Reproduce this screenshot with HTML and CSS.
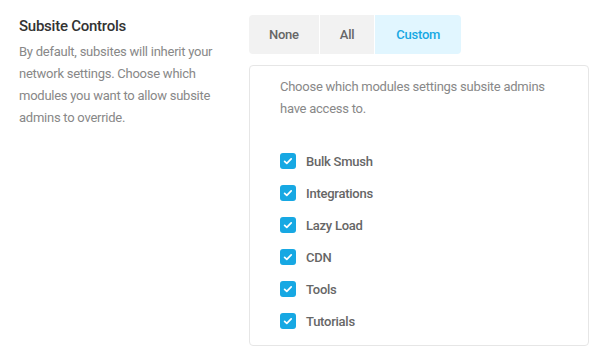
FILE: index.html
```html
<!DOCTYPE html>
<html lang="en">

<head>
    <meta charset="UTF-8">
    <meta name="viewport" content="width=device-width, initial-scale=1.0">
    <title>Subsite Controls</title>
    <link rel="stylesheet" href="styles.css">
</head>

<body>

    <!-- Settings row -->
    <div class="settings-row">
        <div class="settings-label">
            <h3>Subsite Controls</h3>
            <p>By default, subsites will inherit your network settings. Choose which modules you want to allow subsite admins to override.</p>
        </div>

        <div class="settings-content">
            <div class="tabs">
                <div class="tab">None</div>
                <div class="tab">All</div>
                <div class="tab active">Custom</div>
            </div>

            <div class="tab-box">
                <p class="box-desc">Choose which modules settings subsite admins have access to.</p>
                <ul class="module-list">
                    <li><span class="check"><svg viewBox="0 0 16 16" width="16" height="16"><path d="M4.6 8.3l2.2 2.1 4.4-4.6" fill="none" stroke="#fff" stroke-width="1.7" stroke-linecap="round" stroke-linejoin="round"/></svg></span>Bulk Smush</li>
                    <li><span class="check"><svg viewBox="0 0 16 16" width="16" height="16"><path d="M4.6 8.3l2.2 2.1 4.4-4.6" fill="none" stroke="#fff" stroke-width="1.7" stroke-linecap="round" stroke-linejoin="round"/></svg></span>Integrations</li>
                    <li><span class="check"><svg viewBox="0 0 16 16" width="16" height="16"><path d="M4.6 8.3l2.2 2.1 4.4-4.6" fill="none" stroke="#fff" stroke-width="1.7" stroke-linecap="round" stroke-linejoin="round"/></svg></span>Lazy Load</li>
                    <li><span class="check"><svg viewBox="0 0 16 16" width="16" height="16"><path d="M4.6 8.3l2.2 2.1 4.4-4.6" fill="none" stroke="#fff" stroke-width="1.7" stroke-linecap="round" stroke-linejoin="round"/></svg></span>CDN</li>
                    <li><span class="check"><svg viewBox="0 0 16 16" width="16" height="16"><path d="M4.6 8.3l2.2 2.1 4.4-4.6" fill="none" stroke="#fff" stroke-width="1.7" stroke-linecap="round" stroke-linejoin="round"/></svg></span>Tools</li>
                    <li><span class="check"><svg viewBox="0 0 16 16" width="16" height="16"><path d="M4.6 8.3l2.2 2.1 4.4-4.6" fill="none" stroke="#fff" stroke-width="1.7" stroke-linecap="round" stroke-linejoin="round"/></svg></span>Tutorials</li>
                </ul>
            </div>
        </div>
    </div>

</body>

</html>
```

FILE: styles.css
```css
* {
    margin: 0;
    padding: 0;
    box-sizing: border-box;
    font-family: "Roboto", sans-serif;
    letter-spacing: -0.25px;
}

body {
    background-color: #fff;
}

/* Row */
.settings-row {
    display: flex;
    padding: 15px 0 0 19px;
}

.settings-label {
    width: 230px;
    flex-shrink: 0;
    padding-right: 20px;
}

.settings-label h3 {
    font-size: 15px;
    font-weight: 500;
    line-height: 22px;
    color: #333;
    margin-bottom: 4px;
}

.settings-label p {
    font-size: 13px;
    line-height: 22px;
    color: #888;
}

.settings-content {
    width: 340px;
}

/* Tabs */
.tabs {
    display: inline-flex;
    gap: 1px;
    margin-bottom: 11px;
}

.tab {
    height: 39px;
    line-height: 39px;
    padding: 0 20px;
    font-size: 13px;
    font-weight: 500;
    color: #666;
    background: #f2f2f2;
}

.tab:first-child {
    border-radius: 4px 0 0 4px;
}

.tab:last-child {
    border-radius: 0 4px 4px 0;
}

.tab.active {
    padding: 0 21px;
    background: #e1f6ff;
    color: #17a8e3;
}

/* Box */
.tab-box {
    border: 1px solid #e6e6e6;
    border-radius: 4px;
    padding: 10px 30px 8px 30px;
}

.box-desc {
    font-size: 13px;
    line-height: 22px;
    color: #888;
    margin-bottom: 25px;
}

.module-list {
    list-style: none;
}

.module-list li {
    display: flex;
    align-items: center;
    gap: 10px;
    height: 32px;
    font-size: 13px;
    font-weight: 500;
    color: #666;
}

.check {
    width: 16px;
    height: 16px;
    border-radius: 3px;
    background: #17a8e3;
    display: flex;
}
```
